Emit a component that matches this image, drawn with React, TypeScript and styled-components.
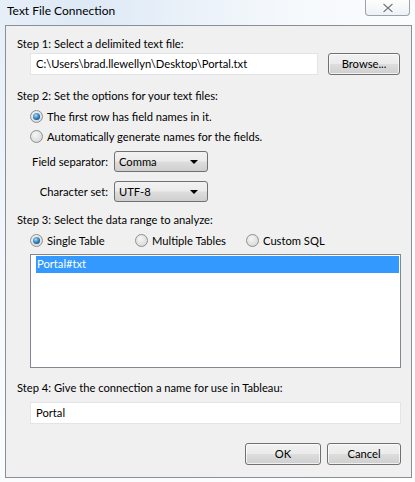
import styled, { createGlobalStyle } from "styled-components";

const GlobalStyle = createGlobalStyle`
    html, body {
        margin: 0;
        padding: 0;
        background: #eef4fa;
    }
    * {
        box-sizing: border-box;
    }
`;

const Window = styled.div`
    width: 415px;
    height: 482px;
    overflow: hidden;
    font-family: Lato, "Noto Sans", sans-serif;
    font-size: 11.2px;
    color: #000;
    background: radial-gradient(ellipse at 20% 0%, #dde9f6 0%, #f6f9fc 45%, #ffffff 100%);
    display: flex;
    flex-direction: column;
    padding: 0 3px 4px 5px;
`;

const TitleBar = styled.div`
    height: 25px;
    display: flex;
    align-items: flex-start;
    justify-content: space-between;
`;

const Title = styled.div`
    padding: 3px 0 0 2px;
    line-height: 16px;
    font-size: 12px;
    color: #000;
`;

const CloseButton = styled.div`
    width: 45px;
    height: 16px;
    margin-right: 2px;
    border: 1px solid #9aa3ad;
    border-top: none;
    border-radius: 0 0 4px 4px;
    background: linear-gradient(#fdfdfd, #eef1f5);
    display: flex;
    align-items: center;
    justify-content: center;
`;

const Panel = styled.div`
    flex: 1;
    background: #f0f0f0;
    border: 1px solid #8a8f96;
    padding: 10px 10px 0 11px;
    display: flex;
    flex-direction: column;
`;

const StepLabel = styled.div<{ top?: number }>`
    line-height: 16px;
    margin-top: ${p => p.top ?? 0}px;
`;

const Indented = styled.div<{ top?: number }>`
    margin-left: 13px;
    margin-top: ${p => p.top ?? 0}px;
    display: flex;
    align-items: center;
`;

const TextBox = styled.div<{ width: number }>`
    width: ${p => p.width}px;
    height: 22px;
    background: #fff;
    border: 1px solid #e1e4e8;
    padding: 0 5px;
    display: flex;
    align-items: center;
    line-height: 16px;
`;

const Button = styled.div<{ width: number }>`
    width: ${p => p.width}px;
    height: 22px;
    border: 1px solid #707070;
    border-radius: 3px;
    background: linear-gradient(#f2f2f2 0%, #ebebeb 48%, #dddddd 52%, #cfcfcf 100%);
    box-shadow: inset 0 0 0 1px rgba(255, 255, 255, 0.7);
    display: flex;
    align-items: center;
    justify-content: center;
    line-height: 16px;
`;

const RadioRow = styled.div<{ top?: number }>`
    margin-left: 13px;
    margin-top: ${p => p.top ?? 0}px;
    display: flex;
    align-items: center;
    height: 20px;
`;

const RadioOption = styled.div<{ width?: number }>`
    display: flex;
    align-items: center;
    gap: 4px;
    width: ${p => (p.width ? `${p.width}px` : "auto")};
`;

const RadioCircle = styled.span<{ checked?: boolean }>`
    width: 13px;
    height: 13px;
    border-radius: 50%;
    border: 1px solid #8e8f8f;
    background: radial-gradient(circle at 40% 35%, #f6f6f6 0%, #dcdcdc 70%, #cfcfcf 100%);
    display: flex;
    align-items: center;
    justify-content: center;
    &::after {
        content: "";
        display: ${p => (p.checked ? "block" : "none")};
        width: 7px;
        height: 7px;
        border-radius: 50%;
        background: radial-gradient(circle at 40% 35%, #a6dcf6 0%, #1c6fb0 60%, #0a4d8c 100%);
    }
`;

const FieldRow = styled.div<{ top?: number }>`
    display: flex;
    align-items: center;
    margin-top: ${p => p.top ?? 0}px;
`;

const FieldLabel = styled.div`
    width: 97px;
    text-align: right;
    padding-right: 6px;
    line-height: 16px;
`;

const Select = styled.div`
    width: 94px;
    height: 21px;
    border: 1px solid #707070;
    border-radius: 3px;
    background: linear-gradient(#f2f2f2 0%, #ebebeb 48%, #dddddd 52%, #cfcfcf 100%);
    display: flex;
    align-items: center;
    justify-content: space-between;
    padding: 0 9px 0 4px;
    line-height: 16px;
`;

const Arrow = styled.span`
    width: 0;
    height: 0;
    border-left: 4px solid transparent;
    border-right: 4px solid transparent;
    border-top: 4px solid #000;
`;

const ListBox = styled.div`
    margin: 4px 0 0 13px;
    width: 371px;
    height: 114px;
    background: #fff;
    border: 1px solid #828790;
    padding: 1px 1px 0 5px;
`;

const ListItem = styled.div<{ selected?: boolean }>`
    height: 17px;
    line-height: 16px;
    padding-left: 1px;
    background: ${p => (p.selected ? "#3399ff" : "transparent")};
    color: ${p => (p.selected ? "#fff" : "#000")};
`;

const ButtonRow = styled.div`
    display: flex;
    justify-content: flex-end;
    gap: 6px;
    margin-top: 19px;
`;

const App = () => {
    return (
        <Window>
            <GlobalStyle />
            <TitleBar>
                <Title>Text File Connection</Title>
                <CloseButton>
                    <svg width="12" height="10" viewBox="0 0 12 10">
                        <path d="M1.5 1 L10.5 9 M10.5 1 L1.5 9" stroke="#fff" strokeWidth="3" strokeLinecap="square" />
                        <path d="M1.5 1 L10.5 9 M10.5 1 L1.5 9" stroke="#6f7780" strokeWidth="1.2" />
                    </svg>
                </CloseButton>
            </TitleBar>
            <Panel>
                <StepLabel>Step 1: Select a delimited text file:</StepLabel>
                <Indented top={1}>
                    <TextBox width={288}>C:\Users\brad.llewellyn\Desktop\Portal.txt</TextBox>
                    <Button width={72} style={{ marginLeft: 10 }}>Browse...</Button>
                </Indented>
                <StepLabel top={13}>Step 2: Set the options for your text files:</StepLabel>
                <RadioRow top={2}>
                    <RadioOption>
                        <RadioCircle checked />
                        The first row has field names in it.
                    </RadioOption>
                </RadioRow>
                <RadioRow>
                    <RadioOption>
                        <RadioCircle />
                        Automatically generate names for the fields.
                    </RadioOption>
                </RadioRow>
                <FieldRow top={5}>
                    <FieldLabel>Field separator:</FieldLabel>
                    <Select>Comma<Arrow /></Select>
                </FieldRow>
                <FieldRow top={9}>
                    <FieldLabel>Character set:</FieldLabel>
                    <Select>UTF-8<Arrow /></Select>
                </FieldRow>
                <StepLabel top={10}>Step 3: Select the data range to analyze:</StepLabel>
                <RadioRow top={2}>
                    <RadioOption width={105}>
                        <RadioCircle checked />
                        Single Table
                    </RadioOption>
                    <RadioOption width={111}>
                        <RadioCircle />
                        Multiple Tables
                    </RadioOption>
                    <RadioOption>
                        <RadioCircle />
                        Custom SQL
                    </RadioOption>
                </RadioRow>
                <ListBox>
                    <ListItem selected>Portal#txt</ListItem>
                </ListBox>
                <StepLabel top={12}>Step 4: Give the connection a name for use in Tableau:</StepLabel>
                <Indented top={6}>
                    <TextBox width={371}>Portal</TextBox>
                </Indented>
                <ButtonRow>
                    <Button width={76}>OK</Button>
                    <Button width={74}>Cancel</Button>
                </ButtonRow>
            </Panel>
        </Window>
    );
};

export default App;
